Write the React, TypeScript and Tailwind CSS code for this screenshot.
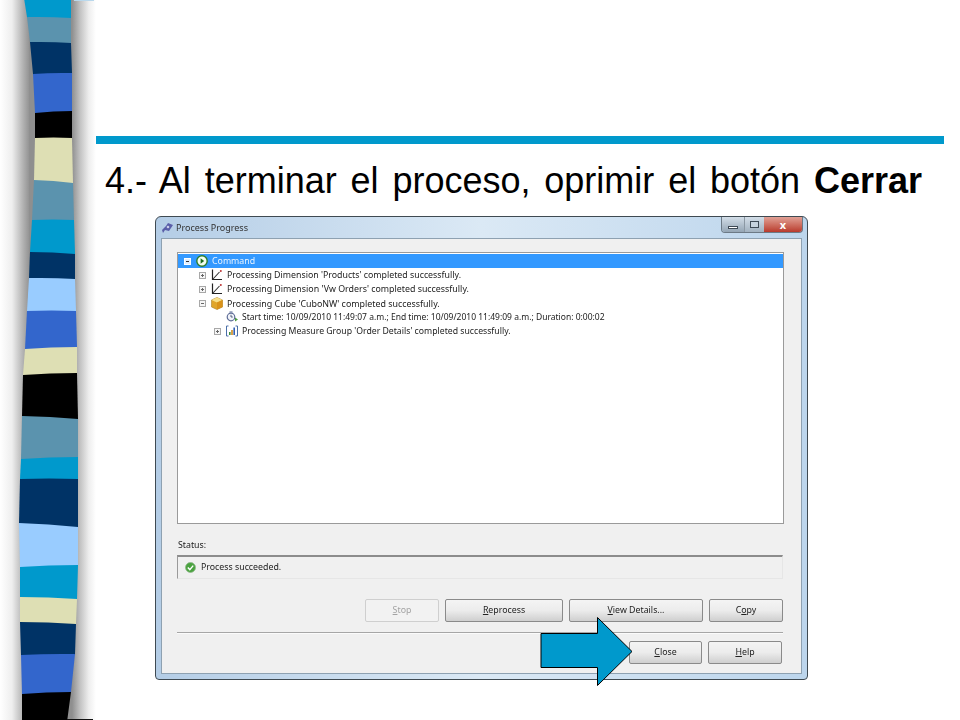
const bands: [string, number, number, number, number, number, number][] = [
  ["#0099cc", 24, 71, -2, -2, 17, 18],
  ["#5b93ae", 27, 71, 17, 18, 42, 43],
  ["#003366", 30, 71, 42, 43, 74, 73],
  ["#3366cc", 33, 72, 74, 73, 113, 111],
  ["#000000", 35, 72, 113, 111, 138, 138],
  ["#dedfb4", 35, 72, 138, 138, 180, 183],
  ["#5b93ae", 34, 73, 180, 183, 220, 220],
  ["#0099cc", 32, 74, 220, 220, 252, 254],
  ["#003366", 30, 75, 252, 254, 278, 279],
  ["#99ccff", 29, 75, 278, 279, 311, 311],
  ["#3366cc", 27, 76, 311, 311, 349, 347],
  ["#dedfb4", 25, 77, 349, 347, 375, 373],
  ["#000000", 23, 77, 375, 373, 416, 419],
  ["#5b93ae", 22, 78, 416, 419, 459, 457],
  ["#0099cc", 21, 78, 459, 457, 479, 479],
  ["#003366", 20, 78, 479, 479, 523, 527],
  ["#99ccff", 19, 78, 523, 527, 567, 565],
  ["#0099cc", 20, 78, 567, 565, 597, 599],
  ["#dedfb4", 20, 77, 597, 599, 622, 624],
  ["#003366", 20, 76, 622, 624, 655, 654],
  ["#3366cc", 21, 75, 655, 654, 694, 692],
  ["#000000", 22, 71, 694, 692, 722, 722],
];

function Strip() {
  return (
    <svg width="96" height="720" viewBox="0 0 96 720" className="block">
      <defs>
        <linearGradient id="shL" x1="0" x2="1" y1="0" y2="0">
          <stop offset="0" stopColor="#ffffff" />
          <stop offset="0.4" stopColor="#eeeeee" />
          <stop offset="0.75" stopColor="#b5b5b5" />
          <stop offset="1" stopColor="#8f8f8f" />
        </linearGradient>
        <linearGradient id="shR" x1="0" x2="1" y1="0" y2="0">
          <stop offset="0" stopColor="#8f8f8f" />
          <stop offset="0.35" stopColor="#c4c4c4" />
          <stop offset="0.7" stopColor="#eeeeee" />
          <stop offset="1" stopColor="#ffffff" />
        </linearGradient>
      </defs>
      <rect x="0" y="0" width="30" height="720" fill="url(#shL)" />
      <rect x="29" y="0" width="46" height="720" fill="#8f8f8f" />
      <rect x="72" y="0" width="24" height="720" fill="url(#shR)" />
      <path d="M74 0H94V1H74Z" fill="#b9d8ec" />
      {bands.map(([c, l, r, y1, y2, y3, y4], i) => {
        const next = bands[i + 1];
        const nl = next ? next[1] : 22;
        const nr = next ? next[2] : 67;
        return (
          <path key={i} d={`M${l} ${y1}Q${(l + r) / 2} ${(y1 + y2) / 2 - 1} ${r} ${y2}L${nr} ${y4}L${nr} ${y4 + 1}L${nl} ${y3 + 1}L${nl} ${y3}Z`} fill={c} />
        );
      })}
      <path d="M67 719H93V720H67Z" fill="#111" />
    </svg>
  );
}

function Expander({ open, light }: { open?: boolean; light?: boolean }) {
  return (
    <svg width="7" height="7" viewBox="0 0 7 7" className="shrink-0">
      <rect x="0.5" y="0.5" width="6" height="6" fill={light ? "#dfeeff" : "#f6f6f6"} stroke={light ? "#ffffff" : "#a8a8a8"} />
      <path d={open ? "M2 3.5H5" : "M2 3.5H5M3.5 2V5"} stroke={light ? "#333" : "#666"} strokeWidth="1" />
    </svg>
  );
}

function PlayIcon() {
  return (
    <svg width="12" height="12" viewBox="0 0 12 12" className="shrink-0">
      <circle cx="6" cy="6" r="5.2" fill="#f4fff0" stroke="#2f7d2a" strokeWidth="1.4" />
      <path d="M4.6 3.2L8.2 6L4.6 8.8Z" fill="#1d6b1d" />
    </svg>
  );
}

function DimIcon() {
  return (
    <svg width="12" height="12" viewBox="0 0 12 12" className="shrink-0">
      <path d="M1.5 0.5V10.5H11" fill="none" stroke="#222" strokeWidth="1.2" />
      <path d="M2 10L8.5 3" stroke="#333" strokeWidth="1.1" />
      <circle cx="9.8" cy="2" r="1" fill="#b33" />
    </svg>
  );
}

function CubeIcon() {
  return (
    <svg width="12" height="13" viewBox="0 0 12 13" className="shrink-0">
      <path d="M6 0.5L11.5 3V10L6 12.5L0.5 10V3Z" fill="#e0a52a" stroke="#a9812c" strokeWidth="0.6" />
      <path d="M6 0.5L11.5 3L6 5.5L0.5 3Z" fill="#f7e08a" />
      <path d="M6 5.5V12.5L11.5 10V3Z" fill="#d9921a" />
    </svg>
  );
}

function ClockIcon() {
  return (
    <svg width="12" height="12" viewBox="0 0 12 12" className="shrink-0">
      <circle cx="5" cy="6" r="3.8" fill="#f2f4fa" stroke="#5d6c96" strokeWidth="1.2" />
      <path d="M5 3.8V6H6.8" stroke="#33415f" strokeWidth="0.8" fill="none" />
      <path d="M3.5 1H6.5" stroke="#6f7da3" strokeWidth="1.2" />
      <path d="M9 6.5L12 8.5L9 10.5Z" fill="#4d9a42" />
    </svg>
  );
}

function BarsIcon() {
  return (
    <svg width="12" height="12" viewBox="0 0 12 12" className="shrink-0">
      <path d="M2.5 1H0.5V11H2.5M9.5 1H11.5V11H9.5" fill="none" stroke="#4a6fa8" strokeWidth="1" />
      <rect x="3" y="7" width="1.6" height="3" fill="#3f8f3a" />
      <rect x="5.2" y="5" width="1.6" height="5" fill="#d18a1e" />
      <rect x="7.4" y="2.5" width="1.6" height="7.5" fill="#2f5fb5" />
    </svg>
  );
}

function CheckIcon() {
  return (
    <svg width="11" height="11" viewBox="0 0 11 11" className="shrink-0">
      <circle cx="5.5" cy="5.5" r="5" fill="#4aa23f" stroke="#8fb98a" strokeWidth="0.8" />
      <path d="M2.8 5.6L4.8 7.6L8.2 3.6" fill="none" stroke="#fff" strokeWidth="1.4" />
    </svg>
  );
}

function Row({ indent, icon, text, selected, expander, size }: { indent: string; icon: React.ReactNode; text: string; selected?: boolean; expander?: React.ReactNode; size?: string }) {
  return (
    <div className={`flex h-[14px] items-center ${indent} ${selected ? "bg-[#3399ff] text-[#e8f3ff]" : "text-[#222]"}`}>
      <span className="flex w-[12px] shrink-0 items-center">{expander}</span>
      <span className="flex w-[16px] shrink-0 items-center">{icon}</span>
      <span className={`whitespace-nowrap pt-px ${size ?? ""}`}>{text}</span>
    </div>
  );
}

function Btn({ w, pre = "", u, post = "", disabled }: { w: string; pre?: string; u: string; post?: string; disabled?: boolean }) {
  return (
    <div className={`flex h-[23px] ${w} items-center justify-center rounded-[2px] border ${disabled ? "border-[#cfcfcf] bg-[#f2f2f2] text-[#a3a3a3]" : "border-[#8a8a8a] bg-gradient-to-b from-[#f4f4f4] via-[#ececec] to-[#cfcfcf] text-[#222]"}`}>
      <span className="pt-px">{pre}<span className="underline">{u}</span>{post}</span>
    </div>
  );
}

export default function App() {
  return (
    <div className="flex h-[720px] w-[960px] overflow-hidden bg-white font-['Liberation_Sans',sans-serif]">
      <div className="w-[96px] shrink-0">
        <Strip />
      </div>
      <div className="flex w-[864px] flex-col pt-[136px]">
        <div className="mr-4 h-2 bg-[#0099cc]" />
        <h1 className="ml-[9px] mt-[15px] h-[57px] w-[817px] text-[36px] font-normal leading-[44px] text-black [text-align-last:justify]">
          4.- Al terminar el proceso, oprimir el botón <b>Cerrar</b>
        </h1>
        <div className="relative ml-[59px] flex h-[464px] w-[653px] flex-col rounded-t-[6px] rounded-b-[4px] border border-[#3f4a52] bg-gradient-to-r from-[#b4cde6] via-[#dbe9f5] to-[#bcd5ec] font-['Noto_Sans',sans-serif] text-[8.8px] blur-[0.35px]">
          <div className="flex h-[21px] shrink-0 items-start justify-between pl-[5px] pr-[4px]">
            <div className="flex h-[22px] items-center gap-[2px] text-[9px] text-[#333]">
              <svg width="13" height="12" viewBox="0 0 13 12">
                <path d="M1 8L5 4L7 1L12 3L10 6L8 9L4 8L2 11Z" fill="#5a5ea8" />
                <circle cx="7" cy="5" r="1.3" fill="#c9cbe8" />
              </svg>
              <span>Process Progress</span>
            </div>
            <div className="flex h-[16px] overflow-hidden rounded-b-[4px] border border-t-0 border-[#6c7a86]">
              <div className="flex w-[22px] items-end justify-center bg-gradient-to-b from-[#d3dee8] to-[#95a6b5] pb-[3px]">
                <div className="h-[3px] w-[10px] border border-[#3e4a55] bg-white" />
              </div>
              <div className="flex w-[20px] items-center justify-center border-l border-[#8b98a3] bg-gradient-to-b from-[#d3dee8] to-[#a2b2c0]">
                <div className="h-[7px] w-[9px] border border-[#3e4a55] bg-[#c6d3de]" />
              </div>
              <div className="flex w-[38px] items-center justify-center bg-gradient-to-b from-[#e0a095] to-[#b8392c] text-[11px] font-bold leading-none text-white">
                x
              </div>
            </div>
          </div>
          <div className="mx-[5px] mb-[5px] flex flex-1 flex-col border border-[#8ea1b1] bg-[#f0f0f0] px-[15px] pt-[13px]">
            <div className="h-[272px] w-[607px] border border-[#9a9a9a] bg-white pt-px">
              <Row selected indent="pl-[6px]" expander={<Expander open light />} icon={<PlayIcon />} text="Command" />
              <Row indent="pl-[21px]" expander={<Expander />} icon={<DimIcon />} text="Processing Dimension 'Products' completed successfully." />
              <Row indent="pl-[21px]" size="text-[8.85px]" expander={<Expander />} icon={<DimIcon />} text="Processing Dimension 'Vw Orders' completed successfully." />
              <Row indent="pl-[21px]" size="text-[8.9px]" expander={<Expander open />} icon={<CubeIcon />} text="Processing Cube 'CuboNW' completed successfully." />
              <Row indent="pl-[36px]" size="text-[8.5px]" icon={<ClockIcon />} text="Start time: 10/09/2010 11:49:07 a.m.; End time: 10/09/2010 11:49:09 a.m.; Duration: 0:00:02" />
              <Row indent="pl-[36px]" size="text-[8.7px]" expander={<Expander />} icon={<BarsIcon />} text="Processing Measure Group 'Order Details' completed successfully." />
            </div>
            <div className="mt-[14px] h-[17px] pl-px leading-[14px] text-[#222]">Status:</div>
            <div className="flex h-[24px] w-[606px] items-center gap-[5px] border-l border-t-2 border-[#8c8c8c] border-l-[#9a9a9a] pl-[7px] text-[#222] border-b border-b-[#e6e6e6] border-r border-r-[#e6e6e6]">
              <CheckIcon />
              <span className="pt-px">Process succeeded.</span>
            </div>
            <div className="mt-[20px] flex justify-end gap-[6px] pr-[3px]">
              <Btn disabled w="w-[74px]" u="S" post="top" />
              <Btn w="w-[118px]" u="R" post="eprocess" />
              <Btn w="w-[134px]" u="V" post="iew Details..." />
              <Btn w="w-[74px]" pre="C" u="o" post="py" />
            </div>
            <div className="mt-[10px] h-[2px] w-[606px] border-b border-[#fbfbfb] bg-[#a6a6a6]" />
            <div className="mt-[7px] flex justify-end gap-[6px] pr-[4px]">
              <Btn w="w-[73px]" u="C" post="lose" />
              <Btn w="w-[74px]" u="H" post="elp" />
            </div>
          </div>
          <svg width="96" height="72" viewBox="0 0 96 72" className="absolute left-[384px] top-[399px]">
            <path d="M1 17.5H57.5V1.5L92 35.5L57.5 69.5V51.5H1Z" fill="#0099cc" stroke="#000" strokeWidth="1" />
          </svg>
        </div>
      </div>
    </div>
  );
}
